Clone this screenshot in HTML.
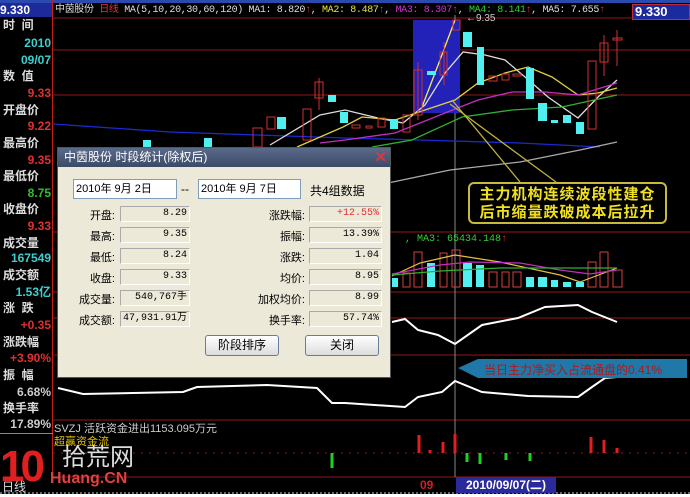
<!DOCTYPE html>
<html><head><meta charset="utf-8"><style>
*{margin:0;padding:0;box-sizing:border-box}
body{width:690px;height:497px;background:#000;overflow:hidden;position:relative;font-family:"Liberation Sans","Noto Sans CJK SC",sans-serif;}
.a{position:absolute;white-space:nowrap}
.lp{position:absolute;left:0;width:52px;font-size:12px;font-weight:bold;line-height:16px}
.lab{color:#ddd;left:3px}
.val{text-align:right;width:51px}
.dlg{position:absolute;left:57px;top:147px;width:334px;height:231px;background:#ece9d8;border:1px solid #555}
.tb{height:19px;background:linear-gradient(#5a6a8a,#3c4a66);color:#fff;font-size:12px;line-height:19px;padding-left:6px}
.dl{position:absolute;font-size:11px;color:#000;text-align:right}
.bx{position:absolute;height:16px;border:1px solid #aaa;border-right-color:#fff;border-bottom-color:#fff;background:#ece9d8;font-size:10px;text-align:right;padding-right:2px;line-height:14px;font-family:"Liberation Mono","Noto Sans CJK SC",monospace;white-space:nowrap;overflow:hidden}
.btn{position:absolute;height:21px;width:74px;border:1px solid #6a7a9a;border-radius:3px;background:linear-gradient(#fff,#dcdcdc);font-size:12px;text-align:center;line-height:19px}
.inp{position:absolute;height:20px;background:#fff;border:1px solid #7f9db9;font-size:11px;line-height:18px;padding-left:2px}
</style></head><body>
<div class="a" style="left:0;top:0;width:690px;height:3px;background:#2a4ab0"></div>
<div class="a" style="left:0;top:3px;width:52px;height:14px;background:#1c2a9a;color:#fff;font-size:12px;font-weight:bold;line-height:14px">9.330</div>
<div class="a" style="left:52px;top:0;width:1px;height:480px;background:#c02020"></div>
<div class="a" style="left:0;top:433px;width:53px;height:1px;background:#888"></div>
<div class="lp lab" style="top:17px">时&nbsp;&nbsp;间</div>
<div class="lp val" style="top:35px;color:#3ad0d0">2010</div>
<div class="lp val" style="top:52px;color:#3ad0d0">09/07</div>
<div class="lp lab" style="top:68px">数&nbsp;&nbsp;值</div>
<div class="lp val" style="top:85px;color:#e03030">9.33</div>
<div class="lp lab" style="top:102px">开盘价</div>
<div class="lp val" style="top:118px;color:#e03030">9.22</div>
<div class="lp lab" style="top:135px">最高价</div>
<div class="lp val" style="top:152px;color:#e03030">9.35</div>
<div class="lp lab" style="top:168px">最低价</div>
<div class="lp val" style="top:185px;color:#30c030">8.75</div>
<div class="lp lab" style="top:201px">收盘价</div>
<div class="lp val" style="top:218px;color:#e03030">9.33</div>
<div class="lp lab" style="top:235px">成交量</div>
<div class="lp val" style="top:250px;color:#3ad0d0">167549</div>
<div class="lp lab" style="top:267px">成交额</div>
<div class="lp val" style="top:284px;color:#3ad0d0">1.53亿</div>
<div class="lp lab" style="top:300px">涨&nbsp;&nbsp;跌</div>
<div class="lp val" style="top:317px;color:#e03030">+0.35</div>
<div class="lp lab" style="top:334px">涨跌幅</div>
<div class="lp val" style="top:350px;color:#e03030">+3.90%</div>
<div class="lp lab" style="top:367px">振&nbsp;&nbsp;幅</div>
<div class="lp val" style="top:384px;color:#ccc">6.68%</div>
<div class="lp lab" style="top:400px">换手率</div>
<div class="lp val" style="top:416px;color:#ccc">17.89%</div>

<svg class="a" style="left:0;top:0" width="690" height="497">
<g stroke="#901818" stroke-width="1">
<line x1="53" y1="18" x2="690" y2="18"/><line x1="53" y1="50" x2="690" y2="50"/><line x1="53" y1="95" x2="690" y2="95"/>
<line x1="53" y1="232" x2="690" y2="232"/><line x1="53" y1="292" x2="690" y2="292"/><line x1="53" y1="318" x2="690" y2="318"/>
<line x1="53" y1="355" x2="690" y2="355"/><line x1="53" y1="420" x2="690" y2="420"/><line x1="53" y1="477" x2="690" y2="477"/>
<line x1="53" y1="453" x2="690" y2="453" stroke-dasharray="2,6"/>
</g>
<line x1="455" y1="15" x2="455" y2="477" stroke="#888"/>
<rect x="413" y="20" width="47" height="93" fill="#2222b8"/>
<g fill="none" stroke-width="1.3">
<polyline stroke="#1a2ad0" points="53,124 170,132 345,138 420,140 520,143 600,147"/>
<polyline stroke="#aaa" points="388,183 450,170 520,162 580,150 617,142"/>
<polyline stroke="#ddd" points="270,145 320,115 345,110 378,118 403,123 425,105 445,73 463,52 485,55 505,60 525,77 548,97 578,118 598,97 617,80"/>
<polyline stroke="#e0d040" points="297,147 343,127 362,117 395,120 425,110 455,100 478,83 505,73 528,67 552,77 578,95 598,93 617,88"/>
<polyline stroke="#f0f060" points="422,107 440,60 455,20"/>
<polyline stroke="#c030c0" points="320,143 345,140 395,133 445,113 478,100 512,92 545,92 578,95 617,83"/>
<polyline stroke="#30b030" points="372,147 412,140 462,117 512,110 562,107 617,95"/>
<line x1="520" y1="182" x2="452" y2="100" stroke="#c0b040"/><line x1="556" y1="182" x2="450" y2="104" stroke="#c0b040"/>
</g>
<g stroke="#d03030" fill="none">
<rect x="315" y="82" width="8" height="16"/><rect x="267" y="117" width="8" height="12"/><rect x="253" y="128" width="9" height="19"/><rect x="303" y="109" width="8" height="31"/>
<rect x="352" y="125" width="8" height="3"/><rect x="366" y="126" width="6" height="2"/><rect x="378" y="118" width="7" height="9"/><rect x="403" y="115" width="7" height="17"/>
<rect x="414" y="70" width="8" height="45"/><rect x="440" y="52" width="7" height="23"/><rect x="453" y="20" width="7" height="10"/>
<rect x="489" y="76" width="8" height="5"/><rect x="502" y="74" width="7" height="6"/><rect x="513" y="74" width="8" height="2"/>
<rect x="588" y="61" width="8" height="68"/><rect x="600" y="43" width="8" height="19"/><rect x="613" y="38" width="9" height="2"/>
<line x1="319" y1="78" x2="319" y2="110"/><line x1="444" y1="42" x2="444" y2="85"/><line x1="604" y1="35" x2="604" y2="76"/><line x1="617" y1="30" x2="617" y2="66"/><line x1="418" y1="62" x2="418" y2="120"/>
</g>
<g fill="#50f0f0">
<rect x="328" y="95" width="8" height="7"/><rect x="277" y="117" width="9" height="12"/><rect x="340" y="112" width="8" height="11"/>
<rect x="390" y="119" width="8" height="10"/><rect x="427" y="71" width="9" height="4"/><rect x="463" y="32" width="9" height="15"/><rect x="477" y="47" width="7" height="38"/>
<rect x="526" y="68" width="8" height="31"/><rect x="538" y="103" width="9" height="18"/><rect x="551" y="120" width="7" height="3"/><rect x="563" y="115" width="8" height="8"/><rect x="576" y="122" width="8" height="12"/>
<rect x="143" y="140" width="8" height="8"/><rect x="204" y="138" width="8" height="10"/>
</g>
<g fill="#50f0f0"><rect x="392" y="278" width="6" height="9"/><rect x="427" y="263" width="8" height="24"/><rect x="463" y="263" width="9" height="24"/><rect x="476" y="265" width="8" height="22"/>
<rect x="526" y="277" width="8" height="10"/><rect x="538" y="277" width="9" height="10"/><rect x="551" y="280" width="7" height="7"/><rect x="563" y="282" width="8" height="5"/><rect x="576" y="282" width="8" height="5"/></g>
<g fill="none" stroke="#d04040"><rect x="403" y="273" width="7" height="14"/><rect x="414" y="252" width="8" height="35"/><rect x="440" y="253" width="7" height="34"/><rect x="452" y="250" width="8" height="37"/>
<rect x="489" y="272" width="8" height="15"/><rect x="502" y="272" width="7" height="15"/><rect x="513" y="272" width="8" height="15"/><rect x="588" y="262" width="8" height="25"/><rect x="600" y="252" width="8" height="35"/><rect x="613" y="270" width="9" height="17"/></g>
<g fill="none" stroke-width="1.2"><polyline stroke="#e0c040" points="392,276 420,263 455,255 500,262 560,275 580,282 617,268"/><polyline stroke="#c030c0" points="392,274 440,265 470,262 520,263 560,270 590,274 617,270"/><polyline stroke="#30b030" points="392,275 440,271 500,268 560,268 617,268"/></g>
<g fill="none" stroke="#fff" stroke-width="2">
<polyline points="392,322 405,319 418,330 438,335 455,344 482,325 518,318 545,307 578,305 592,312 617,322"/>
<polyline points="58,388 83,394 183,392 197,387 267,385 317,388 332,403 345,403 405,407 418,397 442,392 455,381 482,392 528,396 578,397 592,387 605,378 617,377"/>
</g>
<g stroke="#e02020" stroke-width="3"><line x1="419" y1="435" x2="419" y2="453"/><line x1="443" y1="442" x2="443" y2="453"/><line x1="455" y1="434" x2="455" y2="453"/><line x1="591" y1="437" x2="591" y2="453"/><line x1="604" y1="440" x2="604" y2="453"/><line x1="617" y1="448" x2="617" y2="453"/><line x1="430" y1="450" x2="430" y2="453"/></g>
<g stroke="#20d020" stroke-width="3"><line x1="467" y1="453" x2="467" y2="462"/><line x1="480" y1="453" x2="480" y2="464"/><line x1="506" y1="453" x2="506" y2="460"/><line x1="530" y1="453" x2="530" y2="461"/><line x1="332" y1="453" x2="332" y2="468"/></g>
<polygon points="458,368 478,359 687,359 687,378 478,378" fill="#1f78a8"/>
<line x1="0" y1="493" x2="690" y2="493" stroke="#ccc" stroke-dasharray="2,2"/>
<rect x="0" y="494" width="690" height="3" fill="#fff"/>
</svg>
<div class="a" style="left:55px;top:5px;font-size:10px;letter-spacing:-0.35px;line-height:12px;color:#ddd;font-family:'Liberation Mono','Noto Sans CJK SC',monospace">中茵股份 <span style="color:#f03030">日线</span> MA(5,10,20,30,60,120) MA1: 8.820<span style="color:#f03030">↑</span>, <span style="color:#e8e040">MA2: 8.487</span><span style="color:#f03030">↑</span>, <span style="color:#d030d0">MA3: 8.307</span><span style="color:#f03030">↑</span>, <span style="color:#30d030">MA4: 8.141</span><span style="color:#f03030">↑</span>, MA5: 7.655<span style="color:#f03030">↑</span></div>
<div class="a" style="left:632px;top:4px;width:58px;height:16px;background:#1c2aa0;border:1px solid #c03030;color:#fff;font-size:13px;font-weight:bold;line-height:14px;padding-left:2px">9.330</div>
<div class="a" style="left:466px;top:13px;font-size:10px;color:#ccc">←9.35</div>
<div class="a" style="left:405px;top:234px;font-size:10px;color:#30d030;font-family:'Liberation Mono',monospace">, MA3: 65434.148<span style="color:#f03030">↑</span></div>
<div class="a" style="left:468px;top:182px;width:199px;height:42px;border:2px solid #c8b840;border-radius:6px;background:#000;color:#f0e020;font-size:15px;font-weight:bold;line-height:18px;text-align:center;padding-top:2px;letter-spacing:1px">主力机构连续波段性建仓<br>后市缩量跌破成本后拉升</div>
<div class="a" style="left:484px;top:361px;font-size:12px;color:#b01818">当日主力净买入占流通盘的0.41%</div>
<div class="a" style="left:54px;top:420px;font-size:11px;color:#ccc">SVZJ 活跃资金进出1153.095万元</div>
<div class="a" style="left:54px;top:433px;font-size:11px;color:#e0c000">超赢资金流</div>
<div class="a" style="left:420px;top:478px;font-size:12px;color:#d02020;font-weight:bold">09</div>
<div class="a" style="left:456px;top:477px;width:100px;height:16px;background:#2a2a9a;color:#fff;font-size:12px;font-weight:bold;text-align:center;line-height:16px">2010/09/07(二)</div>
<div class="a" style="left:0;top:445px;font-size:44px;font-weight:bold;color:#e02020;line-height:44px;letter-spacing:-4px">10</div>
<div class="a" style="left:62px;top:445px;font-size:24px;color:#ddd;line-height:26px">拾荒网</div>
<div class="a" style="left:50px;top:470px;font-size:16px;font-weight:bold;color:#e04040;line-height:18px">Huang.CN</div>
<div class="a" style="left:2px;top:478px;font-size:12px;color:#ddd">日线</div>

<div class="dlg">
<div class="tb">中茵股份 时段统计(除权后)<span style="position:absolute;right:3px;top:0;color:#f03030;font-weight:bold;font-size:15px">✕</span></div>
<div class="inp" style="left:15px;top:31px;width:104px">2010年 9月 2日</div>
<div class="inp" style="left:140px;top:31px;width:103px">2010年 9月 7日</div>
<div class="a" style="left:123px;top:34px;font-size:12px">--</div>
<div class="a" style="left:252px;top:34px;font-size:12px">共4组数据</div>
<div class="dl" style="left:0;top:59px;width:57px">开盘:</div><div class="bx" style="left:62px;top:58px;width:70px">8.29</div>
<div class="dl" style="left:0;top:80px;width:57px">最高:</div><div class="bx" style="left:62px;top:79px;width:70px">9.35</div>
<div class="dl" style="left:0;top:101px;width:57px">最低:</div><div class="bx" style="left:62px;top:100px;width:70px">8.24</div>
<div class="dl" style="left:0;top:122px;width:57px">收盘:</div><div class="bx" style="left:62px;top:121px;width:70px">9.33</div>
<div class="dl" style="left:0;top:143px;width:57px">成交量:</div><div class="bx" style="left:62px;top:142px;width:70px">540,767手</div>
<div class="dl" style="left:0;top:164px;width:57px">成交额:</div><div class="bx" style="left:62px;top:163px;width:70px">47,931.91万</div>
<div class="dl" style="left:170px;top:59px;width:77px">涨跌幅:</div><div class="bx" style="left:251px;top:58px;width:73px;color:#e03030">+12.55%</div>
<div class="dl" style="left:170px;top:80px;width:77px">振幅:</div><div class="bx" style="left:251px;top:79px;width:73px">13.39%</div>
<div class="dl" style="left:170px;top:101px;width:77px">涨跌:</div><div class="bx" style="left:251px;top:100px;width:73px">1.04</div>
<div class="dl" style="left:170px;top:122px;width:77px">均价:</div><div class="bx" style="left:251px;top:121px;width:73px">8.95</div>
<div class="dl" style="left:170px;top:143px;width:77px">加权均价:</div><div class="bx" style="left:251px;top:142px;width:73px">8.99</div>
<div class="dl" style="left:170px;top:164px;width:77px">换手率:</div><div class="bx" style="left:251px;top:163px;width:73px">57.74%</div>
<div class="btn" style="left:147px;top:187px">阶段排序</div>
<div class="btn" style="left:247px;top:187px">关闭</div>
</div>
</body></html>
